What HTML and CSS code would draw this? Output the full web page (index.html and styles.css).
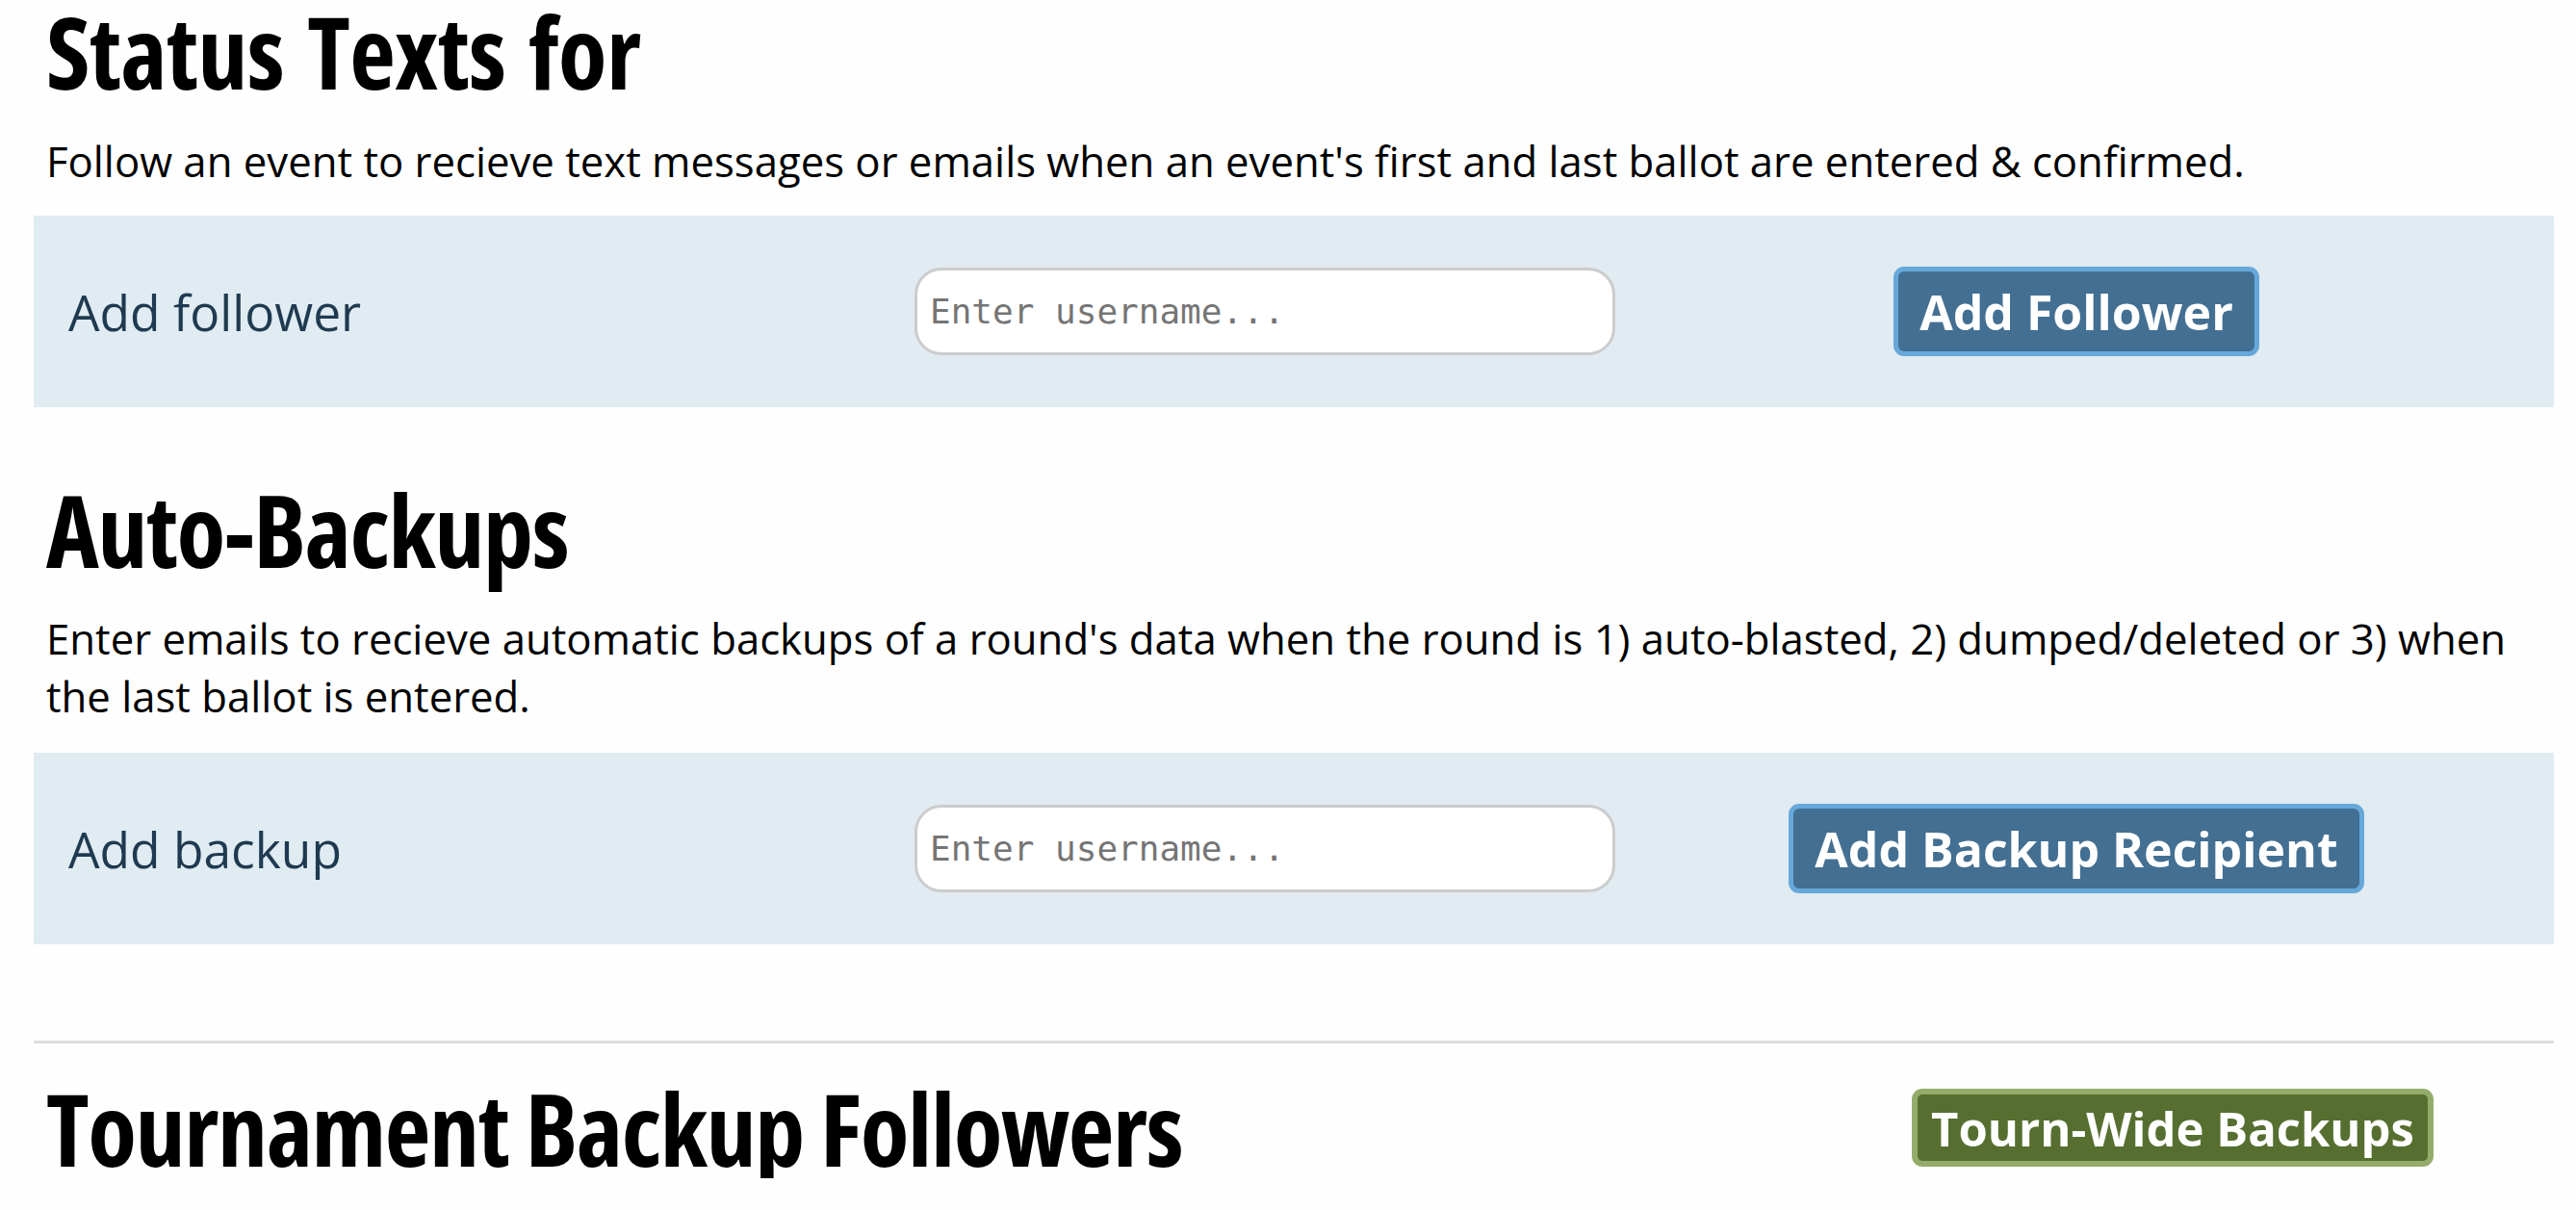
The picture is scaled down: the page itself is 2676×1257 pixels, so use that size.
FILE: index.html
```html
<!DOCTYPE html>
<html lang="en">
<head>
<meta charset="utf-8">
<title>Status Texts</title>
<link rel="stylesheet" href="styles.css">
</head>
<body>
<div class="page">
  <h1 class="title title-first">Status Texts for</h1>
  <p class="desc desc-first">Follow an event to recieve text messages or emails when an event's first and last ballot are entered &amp; confirmed.</p>
  <div class="panel panel-first">
    <div class="panel-label">Add follower</div>
    <div class="panel-input"><input class="username" type="text" placeholder="Enter username..."></div>
    <div class="panel-action"><button class="btn btn-blue" type="button">Add Follower</button></div>
  </div>

  <h1 class="title title-second">Auto-Backups</h1>
  <p class="desc desc-second">Enter emails to recieve automatic backups of a round's data when the round is 1) auto-blasted, 2) dumped/deleted or 3) when the last ballot is entered.</p>
  <div class="panel panel-second">
    <div class="panel-label">Add backup</div>
    <div class="panel-input"><input class="username" type="text" placeholder="Enter username..."></div>
    <div class="panel-action"><button class="btn btn-blue" type="button">Add Backup Recipient</button></div>
  </div>

  <hr class="divider">
  <div class="section-head">
    <h1 class="title title-inline">Tournament Backup Followers</h1>
    <div class="head-action"><button class="btn btn-green" type="button">Tourn-Wide Backups</button></div>
  </div>
</div>
</body>
</html>
```

FILE: styles.css
```css
html, body {
  margin: 0;
  padding: 0;
  background: #fefefe;
}

body {
  font-family: "Open Sans", "Noto Sans", sans-serif;
  color: #000;
}

.page {
  padding: 0 23px 0 35px;
}

.title {
  margin: 0;
  padding-left: 13px;
  font-family: "Open Sans", sans-serif;
  font-stretch: 75%;
  font-weight: 700;
  font-size: 104px;
  line-height: 105px;
  letter-spacing: -1.4px;
  color: #000;
}

.title-first {
  letter-spacing: -0.6px;
  word-spacing: 6px;
}

.title-second {
  margin-top: 74px;
}

.desc {
  margin: 0;
  padding-left: 13px;
  font-size: 43.7px;
  line-height: 59.5px;
  font-weight: 400;
}

.desc-first {
  margin-top: 33px;
}

.desc-second {
  margin-top: 32px;
}

.panel {
  display: flex;
  align-items: center;
  height: 199px;
  padding: 0 17px 0 36px;
  background: #e0ebf2;
}

.panel-first {
  margin-top: 26.5px;
}

.panel-second {
  margin-top: 29px;
}

.panel-label {
  width: 879px;
  flex: none;
  font-size: 51.5px;
  font-weight: 500;
  color: #1f3a50;
}

.panel-input {
  width: 728px;
  flex: none;
}

.username {
  display: block;
  box-sizing: border-box;
  width: 728px;
  height: 91px;
  margin: 0;
  padding: 0 0 0 13px;
  border: 3px solid #cccccc;
  border-radius: 28px;
  background: #ffffff;
  font-family: "DejaVu Sans Mono", monospace;
  font-size: 36px;
  color: #222;
  outline: none;
}

.username::placeholder {
  color: #757575;
}

.panel-action {
  flex: 1;
  display: flex;
  justify-content: center;
}

.btn {
  display: inline-flex;
  align-items: center;
  justify-content: center;
  box-sizing: border-box;
  margin: 0;
  padding: 0 22px;
  font-family: "Open Sans", sans-serif;
  font-weight: 700;
  font-size: 50px;
  color: #ffffff;
  border-radius: 11px;
  cursor: pointer;
  white-space: nowrap;
}

.btn-blue {
  height: 93px;
  background: #436f92;
  border: 5px solid #66a8da;
}

.btn-green {
  height: 81px;
  padding: 0 14px;
  font-size: 49px;
  background: #566f30;
  border: 6px solid #94ac6b;
}

.divider {
  margin: 100px 0 0 0;
  height: 0;
  border: 0;
  border-top: 3px solid #dddddd;
}

.section-head {
  display: flex;
  align-items: center;
  margin-top: 35px;
}

.title-inline {
  flex: 1;
}

.head-action {
  width: 792px;
  flex: none;
  display: flex;
  justify-content: center;
}
```
